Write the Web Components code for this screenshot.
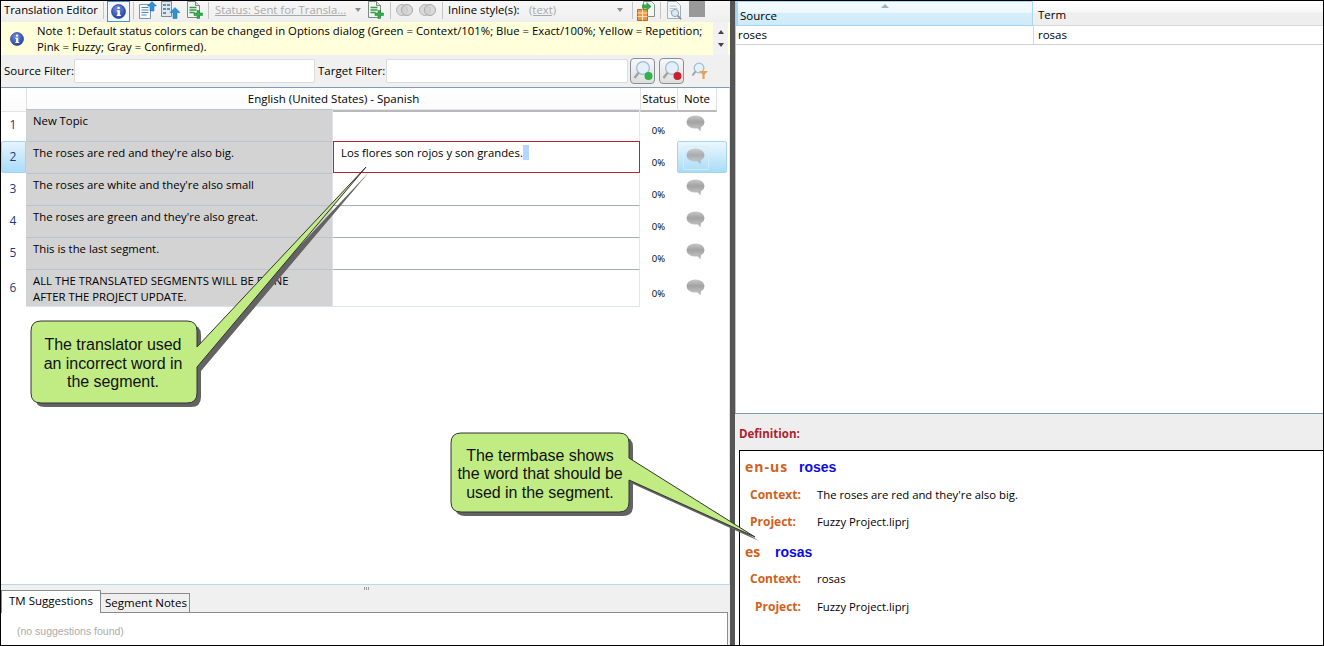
<!DOCTYPE html>
<html>
<head>
<meta charset="utf-8">
<title>Translation Editor</title>
<style>
  html, body { margin: 0; padding: 0; background: #fff; }
  body { font: 11.33px "Open Sans", "Noto Sans", sans-serif; color: #000; overflow: hidden; }
</style>
</head>
<body>
<editor-app></editor-app>

<script>
const ICONS = {
    info: (s) => `<svg width="${s}" height="${s}" viewBox="0 0 14 14"><defs><radialGradient id="ig" cx=".4" cy=".3" r=".8"><stop offset="0" stop-color="#6f8fe0"/><stop offset="1" stop-color="#1f3a9c"/></radialGradient></defs><circle cx="7" cy="7" r="6.5" fill="url(#ig)" stroke="#1c2f80" stroke-width=".6"/><rect x="6" y="2.6" width="2.2" height="2" fill="#fff"/><path d="M5.4 5.8h2.9v4.2h.9v1.1H5.300V10h.8V7h-.7z" fill="#fff"/></svg>`,
    docUp: `<svg width="18" height="18" viewBox="0 0 18 18"><path d="M.5 3.500h11v14H.5z" fill="#f6f9fc" stroke="#7e96a8"/><path d="M2.500 6.500h7M2.500 9h7M2.500 11.500h7M2.500 14h5" stroke="#4f88b8" stroke-width="1.2"/><path d="M13 .5l4.500 4.500H15v5h-4V5H8.500z" fill="#2d93d6" stroke="#1f6da6" stroke-width=".5"/></svg>`,
    docsUp: `<svg width="20" height="18" viewBox="0 0 20 18"><path d="M.5.5h10v15H.5z" fill="#dfe8f0" stroke="#7e8c98"/><path d="M2 3h3v2H2zM6 3h3v2H6zM2 7h3v2H2zM6 7h3v2H6zM2 11h3v2H2z" fill="#5f8fb5"/><path d="M14 6.500l5 5h-3v6h-4v-6H9z" fill="#2d93d6" stroke="#1f6da6" stroke-width=".5"/></svg>`,
    docAdd: `<svg width="16" height="18" viewBox="0 0 16 18"><path d="M.5.5h8l4 4v12H.5z" fill="#f2f5f2" stroke="#7d8a80"/><path d="M8.500.5v4h4" fill="#d8e0d8" stroke="#7d8a80"/><path d="M2.500 6.500h7M2.500 9h7M2.500 11.500h5" stroke="#3b9a4a" stroke-width="1.3"/><path d="M10 9.500h2.500V12H15.500v2.500H12.500V17.500H10v-3H7V12h3z" fill="#34b04a" stroke="#1d7a30" stroke-width=".5"/></svg>`,
    rings: `<svg width="17" height="14" viewBox="0 0 17 14"><circle cx="6" cy="7" r="5.500" fill="#d9d9d9" stroke="#b4b4b4"/><circle cx="11" cy="7" r="5.500" fill="#cfcfcf" fill-opacity=".7" stroke="#a8a8a8"/></svg>`,
    exportGrid: `<svg width="18" height="20" viewBox="0 0 18 20"><path d="M6.500.5h8l3 3v12h-11z" fill="#f2f6f4" stroke="#7f9488"/><path d="M.5 8.500h10v11H.5z" fill="#ee9a3c" stroke="#c2651a"/><path d="M.5 12h10M.5 15.500h10M5.500 8.500v11" stroke="#fbe2c2"/><path d="M5 3.500h4.500V1l5 4.500-5 4.500V7.500H5z" fill="#3aa64a"/></svg>`,
    docSearch: `<svg width="16" height="20" viewBox="0 0 16 20"><path d="M.5.5h9l4 4v13H.5z" fill="#f1f5f7" stroke="#a4b0b8"/><path d="M2.500 5h7M2.500 7.500h8M2.500 10h5" stroke="#b8c6cf"/><circle cx="8" cy="12" r="3.600" fill="#dbe9f2" stroke="#8ea4b2"/><path d="M10.600 14.600l3.600 3.600" stroke="#8b8b8b" stroke-width="1.6"/></svg>`,
    search: (dot) => `<svg width="22" height="22" viewBox="0 0 22 22"><circle cx="11" cy="8" r="6.4" fill="#e3f0fa" stroke="#9fbdd4" stroke-width="1.300"/><path d="M6.600 12.800L2.500 18" stroke="#a2a2a2" stroke-width="2.400"/><circle cx="16.500" cy="16" r="4" fill="${dot}"/></svg>`,
    searchFilter: `<svg width="18" height="18" viewBox="0 0 18 18"><circle cx="8" cy="6" r="4.800" fill="#e6f0f8" stroke="#9fbdd4" stroke-width="1.300"/><path d="M4.500 9.500l-3 4" stroke="#a2a2a2" stroke-width="2"/><path d="M8 9h9l-3.400 3.400V17h-2.200v-4.600z" fill="#e8a15a"/></svg>`,
    bubble: `<svg width="20" height="18" viewBox="0 0 20 18"><defs><linearGradient id="bg" x1="0" y1="0" x2="0" y2="1"><stop offset="0" stop-color="#c8c8c8"/><stop offset=".5" stop-color="#a2a2a2"/><stop offset="1" stop-color="#c0c0c0"/></linearGradient></defs><ellipse cx="9.500" cy="7" rx="9" ry="6.600" fill="url(#bg)"/><path d="M11 12.500l3.500 4 .5-5z" fill="#b4b4b4"/></svg>`
};

class EditorToolbar extends HTMLElement {
    connectedCallback() {
        const root = this.attachShadow({ mode: 'open' });
        root.innerHTML = `
        <style>
        :host { display: flex; align-items: center; height: 21px; padding: 0 0 5px 3px; box-sizing: border-box; white-space: nowrap;
                background: linear-gradient(#f7f7f7, #eeeeee); overflow: hidden; }
        .title { width: 99px; }
        .sep { width: 1px; height: 17px; background: #c4c4c4; flex: none; margin-top: 3px; }
        .pressed { width: 21px; height: 19px; margin-left: 3px; border: 1px solid #3d95e0; align-self: flex-start;
                   display: flex; align-items: center; justify-content: center; background: #f4f8fc; flex: none; }
        .ic { display: flex; flex: none; align-self: flex-start; }
        .muted { color: #a9a9a9; text-decoration: underline; flex: none; }
        .arrow { width: 0; height: 0; border: 3.500px solid transparent; border-top: 4px solid #8d8d8d; border-bottom: 0; flex: none; margin-top: 2px; }
        .block { width: 16px; height: 16px; background: #999; margin-left: 6px; align-self: flex-start; flex: none; }
        </style>
        <span class="title">Translation Editor</span>
        <span class="sep"></span>
        <span class="pressed">${ICONS.info(15)}</span>
        <span class="sep" style="margin-left:3px"></span>
        <span class="ic" style="margin-left:5px">${ICONS.docUp}</span>
        <span class="ic" style="margin-left:4px">${ICONS.docsUp}</span>
        <span class="ic" style="margin-left:6px">${ICONS.docAdd}</span>
        <span class="sep" style="margin-left:5px"></span>
        <span class="muted" style="margin-left:6px;width:136px">Status: Sent for Transla...</span>
        <span class="arrow" style="margin-left:4px"></span>
        <span class="ic" style="margin-left:7px">${ICONS.docAdd}</span>
        <span class="sep" style="margin-left:6px"></span>
        <span class="ic" style="margin-left:5px;margin-top:2px">${ICONS.rings}</span>
        <span class="ic" style="margin-left:6px;margin-top:2px">${ICONS.rings}</span>
        <span class="sep" style="margin-left:6px"></span>
        <span style="margin-left:5px;width:81px;flex:none">Inline style(s):</span>
        <span class="muted" style="width:88px">(text)</span>
        <span class="arrow"></span>
        <span class="sep" style="margin-left:9px"></span>
        <span class="ic" style="margin-left:4px">${ICONS.exportGrid}</span>
        <span class="sep" style="margin-left:5px"></span>
        <span class="ic" style="margin-left:6px">${ICONS.docSearch}</span>
        <span class="block"></span>`;
    }
}
customElements.define('editor-toolbar', EditorToolbar);

class NoteBanner extends HTMLElement {
    connectedCallback() {
        const root = this.attachShadow({ mode: 'open' });
        root.innerHTML = `
        <style>
        :host { display: flex; height: 33px; background: #ffffdc; align-items: stretch; }
        .icon { width: 36px; flex: none; display: flex; align-items: center; padding-left: 9px; box-sizing: border-box; }
        .text { flex: 1; line-height: 16px; padding-top: 1px; white-space: nowrap; }
        .scroll { width: 15px; margin-right: 2px; background: #f2f2f2; display: flex; flex-direction: column;
                  align-items: center; justify-content: space-around; padding: 4px 0; box-sizing: border-box; }
        .up { border: 3.500px solid transparent; border-bottom: 4px solid #444; border-top: 0; }
        .down { border: 3.500px solid transparent; border-top: 4px solid #444; border-bottom: 0; }
        </style>
        <div class="icon">${ICONS.info(14)}</div>
        <div class="text"><slot></slot></div>
        <div class="scroll"><span class="up"></span><span class="down"></span></div>`;
    }
}
customElements.define('note-banner', NoteBanner);

class FilterBar extends HTMLElement {
    connectedCallback() {
        const root = this.attachShadow({ mode: 'open' });
        root.innerHTML = `
        <style>
        :host { display: flex; align-items: center; height: 32px; background: #f0f0f0; padding-left: 3px; white-space: nowrap; font-size: 11.500px; }
        .field { height: 24px; background: #fff; border: 1px solid #dcdcdc; border-radius: 2px; box-sizing: border-box; flex: none; }
        .btn { width: 25px; height: 26px; border: 1px solid #8a8f94; border-radius: 4px; flex: none; box-sizing: border-box;
               background: linear-gradient(#f8f8f8, #dedede); display: flex; align-items: center; justify-content: center; }
        .lbl { flex: none; margin-top: -2px; }
        </style>
        <span class="lbl" style="width:70px">Source Filter:</span>
        <span class="field" style="width:241px"></span>
        <span class="lbl" style="width:68px;margin-left:3px">Target Filter:</span>
        <span class="field" style="width:242px"></span>
        <span class="btn" style="margin-left:2px">${ICONS.search('#2fb24a')}</span>
        <span class="btn" style="margin-left:4px">${ICONS.search('#c8202c')}</span>
        <span style="display:flex;margin-left:7px">${ICONS.searchFilter}</span>`;
    }
}
customElements.define('filter-bar', FilterBar);

class SegmentRow extends HTMLElement {
    connectedCallback() {
        const selected = this.hasAttribute('selected');
        const root = this.attachShadow({ mode: 'open' });
        root.innerHTML = `
        <style>
        :host { display: grid; grid-template-columns: 25px 307px 307px 37px 51px; height: var(--row-h, 32px); }
        .num { color: #1f3a7a; font-size: 12px; padding-top: 7px; text-align: center; padding-right: 1px; box-sizing: border-box; }
        .src { background: #d3d3d3; border-top: 1px solid #bcc3cb; border-right: 1px solid #dfe3e8; padding: 3px 0 0 7px; line-height: 16px; box-sizing: border-box; }
        .tgt { border-top: 1px solid var(--tgt-line, #a9aeb5); padding: 3px 0 0 7px; line-height: 16px; box-sizing: border-box; border-right: 1px solid #e4e8ee; }
        :host([last]) .src, :host([last]) .tgt { border-bottom: 1px solid #dde3ea; }
        :host([last]) .num { padding-top: 10px; }
        .status { font-size: 9.500px; text-align: center; padding-top: 15px; box-sizing: border-box; }
        :host([last]) .status { padding-top: 18px; }
        .note { display: flex; justify-content: center; padding: 6px 13px 0 0; box-sizing: border-box; }
        :host([last]) .note { padding-top: 10px; }
        :host([selected]) .num { background: linear-gradient(#e6f5fd, #a9dcf8); border: 1px solid #a4d4f0; border-radius: 2px 0 0 2px; padding-top: 6px; }
        :host([selected]) .tgt { border: 1px solid #c1212a; padding: 3px 0 0 7px; height: 32px; }
        :host([selected]) .note { background: linear-gradient(#ecf7fd, #a9dcf8); border: 1px solid #a4d4f0; border-radius: 2px; padding-top: 4px; margin-right: 1px; }
        .frame { border: 1px solid #d8eefa; border-radius: 2px; padding: 1px 2px; height: 20px; box-sizing: content-box; opacity: .85; }
        </style>
        <div class="num"><slot name="num"></slot></div>
        <div class="src"><slot></slot></div>
        <div class="tgt"><slot name="target"></slot></div>
        <div class="status">0%</div>
        <div class="note">${selected ? `<span class="frame">${ICONS.bubble}</span>` : ICONS.bubble}</div>`;
    }
}
customElements.define('segment-row', SegmentRow);

class SegmentGrid extends HTMLElement {
    connectedCallback() {
        const root = this.attachShadow({ mode: 'open' });
        root.innerHTML = `
        <style>
        :host { display: block; flex: 1; min-height: 0; border-top: 1px solid #7d9cb5; border-bottom: 1px solid #b7d8ee; border-right: 1px solid #cfe3f2; background: #fff; }
        .head { display: grid; grid-template-columns: 25px 614px 37px 40px; height: 21px; line-height: 22px; box-sizing: border-box; font-size: 11.500px; }
        .head span { background: linear-gradient(#fff, #fbfbfb); border-left: 1px solid #e0e0e0; text-align: center; border-bottom: 2px solid #b9b9b9; box-sizing: border-box; }
        .head span:first-child { border-left: 0; border-bottom: 1px solid #e4e4e4; }
        .head span:last-child { border-right: 1px solid #e0e0e0; }
        </style>
        <div class="head"><span></span><span>English (United States) - Spanish</span><span>Status</span><span>Note</span></div>
        <slot></slot>`;
    }
}
customElements.define('segment-grid', SegmentGrid);

class SuggestionTabs extends HTMLElement {
    connectedCallback() {
        const root = this.attachShadow({ mode: 'open' });
        root.innerHTML = `
        <style>
        :host { display: block; height: 60px; background: #f0f0f0; position: relative; font-size: 11.500px; }
        .grip { position: absolute; left: 363px; top: 2px; width: 5px; height: 3px;
                background: repeating-linear-gradient(90deg, #9a9a9a 0 1px, transparent 1px 2px); }
        .tabs { display: flex; align-items: flex-end; height: 27px; }
        .tab { box-sizing: border-box; border: 1px solid #8b8b8b; border-bottom: 0; white-space: nowrap; }
        .on { width: 100px; height: 23px; background: #fff; padding: 2px 0 0 7px; margin-bottom: -1px; position: relative; z-index: 1; }
        .off { width: 89px; height: 19px; background: #efefef; padding: 1px 0 0 4px; border-left: 0; }
        .body { box-sizing: border-box; height: 33px; width: 727px; background: #fff; border-top: 1px solid #8b8b8b; border-right: 1px solid #8b8b8b;
                padding: 12px 0 0 16px; color: #ababab; font: 10.500px "Liberation Sans", sans-serif; }
        </style>
        <div class="grip"></div>
        <div class="tabs"><div class="tab on">TM Suggestions</div><div class="tab off">Segment Notes</div></div>
        <div class="body">(no suggestions found)</div>`;
    }
}
customElements.define('suggestion-tabs', SuggestionTabs);

class TermTable extends HTMLElement {
    connectedCallback() {
        const root = this.attachShadow({ mode: 'open' });
        root.innerHTML = `
        <style>
        :host { display: block; flex: 1; border-left: 1px solid #a8c8e0; background: #fff; font-size: 11.500px; }
        .head { display: grid; grid-template-columns: 297px 1fr; height: 25px; }
        .head span { padding: 6px 0 0 2px; box-sizing: border-box; position: relative; }
        .source { background: linear-gradient(#f2fafe 0, #eef8fd 45%, #d5eefb 50%, #cfeafa 100%); border: 1px solid #a6d8f4; border-left-width: 2px; }
        .head .term { background: linear-gradient(#fff 0, #f8f8f8 45%, #efefef 50%, #eeeeee 100%); border-bottom: 1px solid #d8d8d8; padding-left: 5px; }
        .sort { position: absolute; left: 143px; top: 2px; border: 4px solid transparent; border-bottom: 4px solid #9bb4c6; border-top: 0; }
        .row { display: grid; grid-template-columns: 297px 1fr; height: 19px; border-bottom: 1px solid #d0d0d0; box-sizing: border-box; line-height: 17px; }
        .row span { padding-left: 2px; }
        .row span + span { border-left: 1px solid #d8d8d8; padding-left: 4px; }
        </style>
        <div class="head"><span class="source"><i class="sort"></i>Source</span><span class="term">Term</span></div>
        <div class="row"><span>roses</span><span>rosas</span></div>`;
    }
}
customElements.define('term-table', TermTable);

class TermDefinition extends HTMLElement {
    connectedCallback() {
        const root = this.attachShadow({ mode: 'open' });
        root.innerHTML = `
        <style>
        :host { display: block; height: 232px; flex: none; background: #fff; border-top: 1px solid #7d9cb5; box-sizing: border-box; }
        .bar { height: 36px; background: #eeeeee; color: #b0202a; font: bold 11.500px/39px "Open Sans", sans-serif; padding-left: 4px; box-sizing: border-box; }
        .box { height: 195px; margin-left: 4px; border: 1px solid #000; border-width: 1px 0 0 1px; box-sizing: border-box; background: #fff; }
        </style>
        <div class="bar">Definition:</div>
        <div class="box"><slot></slot></div>`;
    }
}
customElements.define('term-definition', TermDefinition);

class TermEntry extends HTMLElement {
    connectedCallback() {
        const root = this.attachShadow({ mode: 'open' });
        root.innerHTML = `
        <style>
        :host { display: flex; height: 16px; line-height: 16px; white-space: nowrap; }
        :host([kind="term"]) { font: bold 14px/16px "Liberation Sans", sans-serif; padding-left: 5px; }
        :host([kind="field"]) { padding-left: var(--pad, 10px); }
        .k { color: #d2601a; font-weight: bold; flex: none; width: var(--k-w, 67px); letter-spacing: var(--k-track, 0); }
        :host([kind="field"]) .k { font-size: 12px; }
        :host([kind="term"]) .k { font-family: "Open Sans", sans-serif; }
        :host([kind="term"]) .v { color: #0a0ae6; }
        </style>
        <span class="k"><slot name="k"></slot></span><span class="v"><slot></slot></span>`;
    }
}
customElements.define('term-entry', TermEntry);

// a callout is a drawing laid over the page, so it sits at its own coordinates
class CallOut extends HTMLElement {
    connectedCallback() {
        const [x, y, w, h] = this.getAttribute('box').split(',').map(Number);
        const [t1, t2, tx, ty] = this.getAttribute('tail').split(',').map(Number);
        const r = 10;
        const d = `M${x + r} ${y}H${x + w - r}Q${x + w} ${y} ${x + w} ${y + r}V${t1}L${tx} ${ty}L${x + w} ${t2}V${y + h - r}Q${x + w} ${y + h} ${x + w - r} ${y + h}H${x + r}Q${x} ${y + h} ${x} ${y + h - r}V${y + r}Q${x} ${y} ${x + r} ${y}Z`;
        const root = this.attachShadow({ mode: 'open' });
        root.innerHTML = `
        <style>
        :host { position: absolute; left: 0; top: 0; width: 1324px; height: 646px; pointer-events: none; }
        svg { position: absolute; left: 0; top: 0; }
        .label { position: absolute; left: ${x}px; top: ${y}px; width: ${w}px; height: ${h}px; padding: 4px var(--label-right, 0) 0 0; box-sizing: border-box; display: flex; align-items: center; justify-content: center;
                 text-align: center; font: 16px/18.500px "Liberation Sans", sans-serif; letter-spacing: -0.05px; color: #111; }
        </style>
        <svg width="1324" height="646">
            <path d="${d}" fill="#636363" transform="translate(4 4)"/>
            <path d="${d}" fill="#c1ec84" stroke="#333" stroke-width="1"/>
        </svg>
        <div class="label"><span><slot></slot></span></div>`;
    }
}
customElements.define('call-out', CallOut);

class EditorApp extends HTMLElement {
    connectedCallback() {
        const root = this.attachShadow({ mode: 'open' });
        root.innerHTML = `
        <style>
        :host { display: flex; width: 1324px; height: 646px; box-sizing: border-box; border: 1px solid #000; position: relative; background: #fff; overflow: hidden; }
        .left { width: 729px; flex: none; display: flex; flex-direction: column; }
        .split { width: 5px; flex: none; background: #555; }
        .right { flex: 1; display: flex; flex-direction: column; min-width: 0; }
        </style>
        <div class="left">
            <editor-toolbar></editor-toolbar>
            <note-banner>Note 1: Default status colors can be changed in Options dialog (Green = Context/101%; Blue = Exact/100%; Yellow = Repetition;<br>Pink = Fuzzy; Gray = Confirmed).</note-banner>
            <filter-bar></filter-bar>
            <segment-grid>
                <segment-row style="--tgt-line:#e4e8ee"><span slot="num">1</span>New Topic</segment-row>
                <segment-row selected><span slot="num">2</span>The roses are red and they're also big.<span slot="target">Los flores son rojos y son grandes.<span style="background:#b3d7ff">&nbsp;&nbsp;</span></span></segment-row>
                <segment-row style="--tgt-line:#fff"><span slot="num">3</span>The roses are white and they're also small</segment-row>
                <segment-row><span slot="num">4</span>The roses are green and they're also great.</segment-row>
                <segment-row><span slot="num">5</span>This is the last segment.</segment-row>
                <segment-row last style="--row-h:38px"><span slot="num">6</span>ALL THE TRANSLATED SEGMENTS WILL BE DONE<br>AFTER THE PROJECT UPDATE.</segment-row>
            </segment-grid>
            <suggestion-tabs></suggestion-tabs>
        </div>
        <div class="split"></div>
        <div class="right">
            <term-table></term-table>
            <term-definition>
                <term-entry kind="term" style="margin-top:8px;--k-w:54px;--k-track:1px"><span slot="k">en-us</span>roses</term-entry>
                <term-entry kind="field" style="margin-top:12px"><span slot="k">Context:</span>The roses are red and they're also big.</term-entry>
                <term-entry kind="field" style="margin-top:11px"><span slot="k">Project:</span>Fuzzy Project.liprj</term-entry>
                <term-entry kind="term" style="margin-top:14px;--k-w:30px"><span slot="k">es</span>rosas</term-entry>
                <term-entry kind="field" style="margin-top:11px"><span slot="k">Context:</span>rosas</term-entry>
                <term-entry kind="field" style="margin-top:12px;--pad:15px;--k-w:62px"><span slot="k">Project:</span>Fuzzy Project.liprj</term-entry>
            </term-definition>
        </div>`;
        // callouts use page coordinates, so they are children of the host's own box
        const overlay = document.createElement('div');
        overlay.style.cssText = 'position:absolute;left:-1px;top:-1px';
        overlay.innerHTML = `
            <call-out box="31,321,166,82" tail="347,367,366,167" style="--label-right:2px">The translator used<br>an incorrect word in<br>the segment.</call-out>
            <call-out box="451,433,178,79" tail="458,480,755,537">The termbase shows<br>the word that should be<br>used in the segment.</call-out>`;
        root.appendChild(overlay);
    }
}
customElements.define('editor-app', EditorApp);
</script>
</body>
</html>
